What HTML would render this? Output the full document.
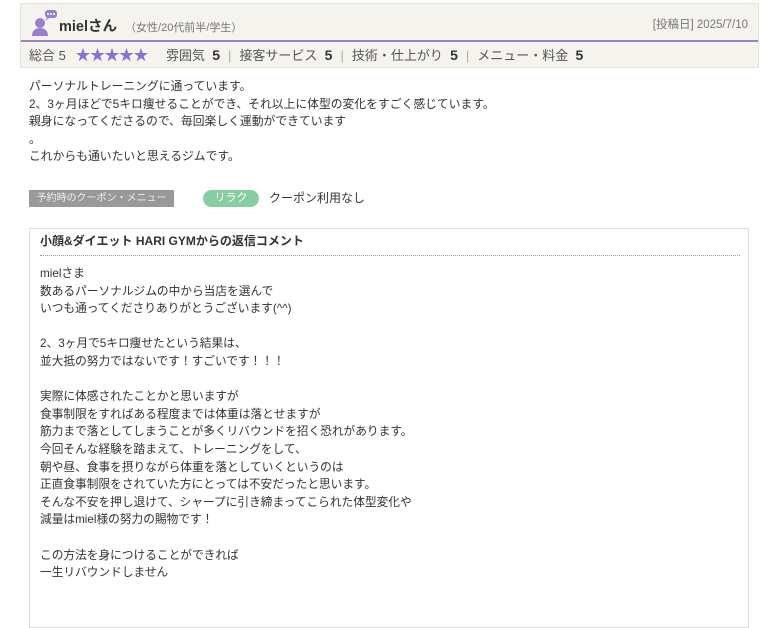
<!DOCTYPE html>
<html><head><meta charset="utf-8"><style>
body{margin:0;background:#fff;font-family:"Liberation Sans","Noto Sans CJK JP",sans-serif;color:#333;width:768px;height:569px;overflow:hidden;position:relative}
.hd{position:absolute;left:20px;top:3px;width:739px;height:65px;background:#f5f3ee;border:1px solid #e6e3dc;box-sizing:border-box}
.top{height:36px;border-bottom:2px solid #9c7fcb;position:relative}
.name{position:absolute;left:38px;top:11px;font-size:14.5px;font-weight:bold;color:#333}
.name small{font-size:11px;font-weight:normal;color:#777;margin-left:8px}
.date{position:absolute;right:10px;top:12px;font-size:11.5px;color:#777}
.rt{position:absolute;left:8px;top:43px;font-size:13px;line-height:16px;color:#555;white-space:nowrap}
.rt b{font-size:14px;color:#333}
.st{color:#8c6fd0;font-size:15px;letter-spacing:-0.5px;margin-left:6px;margin-right:18px}
.sep{color:#aaa;margin:0 8px}
.txt{position:absolute;left:29px;top:78px;font-size:11.8px;line-height:17.6px;color:#333}
.cp{position:absolute;left:29px;top:190px;width:145px;height:17px;background:#999;color:#eee;font-size:10px;line-height:17px;text-align:center}
.rl{position:absolute;left:203px;top:190px;width:56px;height:17px;border-radius:9px;background:#86ce9f;color:#fff;font-size:11px;line-height:17px;text-align:center}
.cn{position:absolute;left:269px;top:190px;font-size:12px;line-height:17px}
.rp{position:absolute;left:29px;top:228px;width:720px;height:400px;border:1px solid #ddd;box-sizing:border-box}
.rp h3{margin:0;position:absolute;left:10px;top:4px;width:700px;font-size:12px;line-height:17px;padding-bottom:5px;border-bottom:1px dotted #999}
.rp p{margin:0;position:absolute;left:10px;top:36px;font-size:11.7px;line-height:17.6px}
</style></head><body>
<div class="hd"><div class="top">
<svg style="position:absolute;left:10px;top:5px" width="28" height="28" viewBox="0 0 28 28"><circle cx="9" cy="14" r="5" fill="#9c7fcb"/><path d="M1 27c0-6 4-8 8-8s8 2 8 8z" fill="#9c7fcb"/><rect x="14" y="1" width="12" height="8" rx="3" fill="#9c7fcb"/><path d="M16 9l-2 3 4-3z" fill="#9c7fcb"/><circle cx="17" cy="5" r="1" fill="#fff"/><circle cx="20" cy="5" r="1" fill="#fff"/><circle cx="23" cy="5" r="1" fill="#fff"/></svg>
<div class="name">mielさん<small>（女性/20代前半/学生）</small></div>
<div class="date">[投稿日] 2025/7/10</div></div>
<div class="rt">総合 5 <span class="st">★★★★★</span>雰囲気&nbsp; <b>5</b><span class="sep">|</span>接客サービス&nbsp; <b>5</b><span class="sep">|</span>技術・仕上がり&nbsp; <b>5</b><span class="sep">|</span>メニュー・料金&nbsp; <b>5</b></div>
</div>
<div class="txt">パーソナルトレーニングに通っています。<br>2、3ヶ月ほどで5キロ痩せることができ、それ以上に体型の変化をすごく感じています。<br>親身になってくださるので、毎回楽しく運動ができています<br>。<br>これからも通いたいと思えるジムです。</div>
<div class="cp">予約時のクーポン・メニュー</div><div class="rl">リラク</div><div class="cn">クーポン利用なし</div>
<div class="rp"><h3>小顔&amp;ダイエット HARI GYMからの返信コメント</h3>
<p>mielさま<br>数あるパーソナルジムの中から当店を選んで<br>いつも通ってくださりありがとうございます(^^)<br><br>2、3ヶ月で5キロ痩せたという結果は、<br>並大抵の努力ではないです！すごいです！！！<br><br>実際に体感されたことかと思いますが<br>食事制限をすればある程度までは体重は落とせますが<br>筋力まで落としてしまうことが多くリバウンドを招く恐れがあります。<br>今回そんな経験を踏まえて、トレーニングをして、<br>朝や昼、食事を摂りながら体重を落としていくというのは<br>正直食事制限をされていた方にとっては不安だったと思います。<br>そんな不安を押し退けて、シャープに引き締まってこられた体型変化や<br>減量はmiel様の努力の賜物です！<br><br>この方法を身につけることができれば<br>一生リバウンドしません</p></div>
</body></html>
